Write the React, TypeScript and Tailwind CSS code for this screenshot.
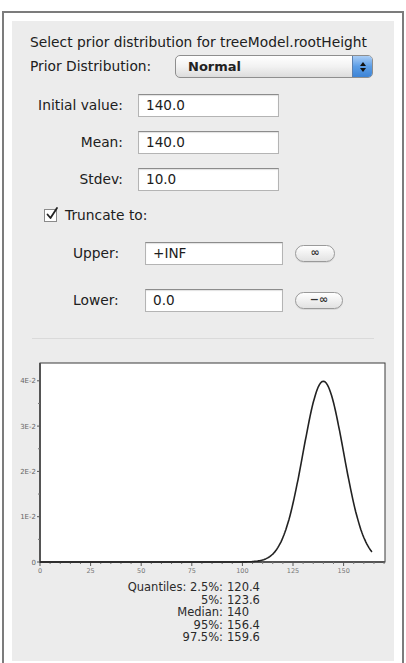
import React from "react";

const font = { fontFamily: '"DejaVu Sans", "Liberation Sans", sans-serif' };

// normal density used for the preview plot
const MEAN = 140;
const SD = 10;
const pdf = (x: number) =>
  Math.exp(-0.5 * ((x - MEAN) / SD) ** 2) / (SD * Math.sqrt(2 * Math.PI));

// plot frame in svg coordinates
const X0 = 28;
const X1 = 373;
const Y0 = 8;
const Y1 = 207;
const PX_PER_UNIT = 2.024;
const PX_PER_CENTI = 45.3;

function TextField({ value, width }: { value: string; width: string }) {
  return (
    <div
      className={`${width} h-[23px] bg-white border border-[#b4b4b4] border-t-[#8c8c8c] shadow-[inset_0_1px_1px_rgba(0,0,0,0.12)] flex items-center pl-[7px] text-[13.6px] text-[#1c1c1c]`}
    >
      {value}
    </div>
  );
}

function PillButton({ label, width }: { label: string; width: string }) {
  return (
    <div
      className={`${width} h-[17px] rounded-full border border-[#9a9a9a] bg-gradient-to-b from-white to-[#e2e2e2] shadow-[0_1px_0_rgba(0,0,0,0.08)] flex items-center justify-center text-[11px] font-bold text-[#333]`}
    >
      {label}
    </div>
  );
}

function DensityPlot() {
  const pts: string[] = [];
  for (let x = 0; x <= 164; x += 0.5) {
    const px = X0 + x * PX_PER_UNIT;
    const py = Y1 - pdf(x) * 100 * PX_PER_CENTI;
    pts.push(`${px.toFixed(1)},${py.toFixed(1)}`);
  }

  const yMajor = [0, 1, 2, 3, 4];
  const xMajor = [0, 25, 50, 75, 100, 125, 150];
  const xMinor: number[] = [];
  for (let v = 0; v <= 170; v += 5) if (v % 25 !== 0) xMinor.push(v);

  return (
    <svg width={380} height={226} className="block">
      <rect x={X0} y={Y0} width={X1 - X0} height={Y1 - Y0} fill="white" stroke="#3a3a3a" strokeWidth={1} />
      <line x1={X0} y1={Y0} x2={X0} y2={Y1 + 1} stroke="#555" strokeWidth={2} />
      <line x1={X0 - 1} y1={Y1} x2={X1} y2={Y1} stroke="#555" strokeWidth={2} />

      {yMajor.map((k) => {
        const y = Y1 - k * PX_PER_CENTI;
        return (
          <g key={k}>
            <line x1={X0 - 3} y1={y} x2={X0} y2={y} stroke="#555" />
            <text x={X0 - 4} y={y + 2.5} fontSize={7} fill="#666" textAnchor="end" fontFamily="DejaVu Sans, sans-serif">
              {k === 0 ? "0" : `${k}E-2`}
            </text>
          </g>
        );
      })}
      {[0.5, 1.5, 2.5, 3.5].map((k) => (
        <line key={k} x1={X0 - 2} y1={Y1 - k * PX_PER_CENTI} x2={X0} y2={Y1 - k * PX_PER_CENTI} stroke="#777" />
      ))}

      {xMajor.map((v) => {
        const x = X0 + v * PX_PER_UNIT;
        return (
          <g key={v}>
            <line x1={x} y1={Y1} x2={x} y2={Y1 + 4} stroke="#555" />
            <text x={x} y={Y1 + 11} fontSize={6.5} fill="#777" textAnchor="middle" fontFamily="DejaVu Sans, sans-serif">
              {v}
            </text>
          </g>
        );
      })}
      {xMinor.map((v) => (
        <line key={v} x1={X0 + v * PX_PER_UNIT} y1={Y1} x2={X0 + v * PX_PER_UNIT} y2={Y1 + 2} stroke="#777" />
      ))}

      <polyline points={pts.join(" ")} fill="none" stroke="#222" strokeWidth={1.6} strokeLinejoin="round" />
    </svg>
  );
}

const quantiles: [string, string][] = [
  ["Quantiles: 2.5%:", "120.4"],
  ["5%:", "123.6"],
  ["Median:", "140"],
  ["95%:", "156.4"],
  ["97.5%:", "159.6"],
];

export default function App() {
  return (
    <div className="w-[406px] h-[663px] bg-white pt-[11px] px-[2px] overflow-hidden" style={font}>
      <div className="h-[652px] border-t-2 border-x-2 border-[#7c7c7c] pt-[8px] px-[8px] bg-white">
        <div className="h-[640px] bg-[#ececec] text-[#202020]">
          {/* header */}
          <div className="pt-[13px] pl-[18px] text-[13.8px] leading-[16px] whitespace-nowrap">
            Select prior distribution for treeModel.rootHeight
          </div>

          <div className="mt-[5px] flex items-center h-[23px]">
            <div className="w-[163px] pl-[18px] text-[13.8px] whitespace-nowrap">Prior Distribution:</div>
            <div className="w-[198px] h-[23px] rounded-[5px] border border-[#8e8e8e] bg-gradient-to-b from-white via-[#f2f2f2] to-[#dcdcdc] flex items-center overflow-hidden">
              <span className="flex-1 pl-[12px] text-[13px] font-bold text-[#222]">Normal</span>
              <div className="w-[20px] h-full bg-gradient-to-b from-[#a9cdf5] via-[#5b9de6] to-[#3d84d6] border-l border-[#5a7fae] flex flex-col items-center justify-center gap-[2px]">
                <div className="w-0 h-0 border-x-[3px] border-x-transparent border-b-[4px] border-b-[#111]" />
                <div className="w-0 h-0 border-x-[3px] border-x-transparent border-t-[4px] border-t-[#111]" />
              </div>
            </div>
          </div>

          {/* initial value / mean / stdev */}
          <div className="mt-[16px] grid grid-cols-[111px_141px] gap-x-[15px] gap-y-[14px] items-center">
            <div className="text-right text-[13.8px] whitespace-nowrap">Initial value:</div>
            <TextField value="140.0" width="w-[141px]" />
            <div className="text-right text-[13.8px]">Mean:</div>
            <TextField value="140.0" width="w-[141px]" />
            <div className="text-right text-[13.8px]">Stdev:</div>
            <TextField value="10.0" width="w-[141px]" />
          </div>

          {/* truncation */}
          <div className="mt-[17px] pl-[32px] flex items-center gap-[8px] h-[14px]">
            <div className="w-[13px] h-[13px] bg-white border border-[#8a8a8a] relative">
              <svg width={15} height={15} viewBox="0 0 15 15" className="absolute -top-[4px] left-[0px]">
                <path d="M2.5 8.5 L5.5 12 L12 2" fill="none" stroke="#222" strokeWidth={1.8} strokeLinecap="round" strokeLinejoin="round" />
              </svg>
            </div>
            <span className="text-[13.8px]">Truncate to:</span>
          </div>

          <div className="mt-[20px] flex items-center h-[23px]">
            <div className="w-[133px] pl-[61px] text-[13.8px]">Upper:</div>
            <TextField value="+INF" width="w-[138px]" />
            <div className="ml-[12px]">
              <PillButton label="∞" width="w-[40px]" />
            </div>
          </div>

          <div className="mt-[24px] flex items-center h-[23px]">
            <div className="w-[133px] pl-[61px] text-[13.8px]">Lower:</div>
            <TextField value="0.0" width="w-[138px]" />
            <div className="ml-[12px]">
              <PillButton label="−∞" width="w-[48px]" />
            </div>
          </div>

          <div className="mt-[26px] mx-[20px] h-px bg-[#dadada]" />

          <div className="mt-[16px]">
            <DensityPlot />
          </div>

          {/* quantile summary */}
          <div className="grid grid-cols-[211px_auto] gap-x-[4px] text-[11.5px] leading-[12.5px] text-[#2a2a2a]">
            {quantiles.map(([k, v]) => (
              <React.Fragment key={k}>
                <div className="text-right whitespace-nowrap">{k}</div>
                <div>{v}</div>
              </React.Fragment>
            ))}
          </div>
        </div>
      </div>
    </div>
  );
}
